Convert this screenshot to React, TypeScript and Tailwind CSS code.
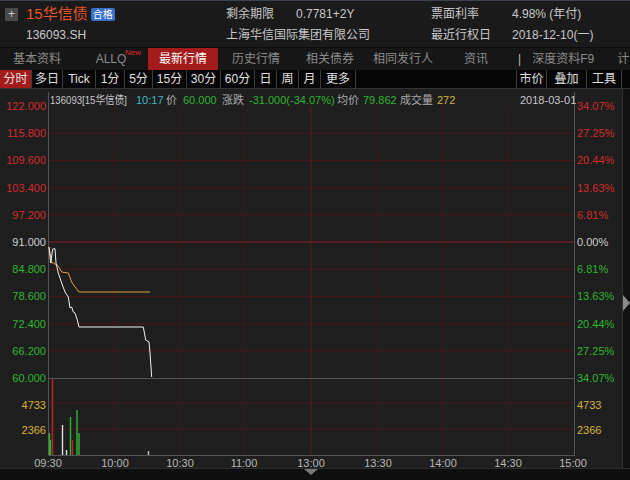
const FONT = { fontFamily: '"Liberation Sans", "Noto Sans CJK SC", sans-serif' };

const periods = ["分时", "多日", "Tick", "1分", "5分", "15分", "30分", "60分", "日", "周", "月", "更多"];
const periodW = [32, 31, 33, 29, 28, 34, 34, 34, 22, 22, 22, 35];

const tabs = [
  { label: "基本资料", w: 74 },
  { label: "ALLQ", w: 74, sup: true },
  { label: "最新行情", w: 70, active: true },
  { label: "历史行情", w: 76 },
  { label: "相关债券", w: 72 },
  { label: "相同发行人", w: 74 },
  { label: "资讯", w: 72 },
];

const priceRows = [
  { p: "122.000", r: "34.07%", c: "#d42a2a" },
  { p: "115.800", r: "27.25%", c: "#d42a2a" },
  { p: "109.600", r: "20.44%", c: "#d42a2a" },
  { p: "103.400", r: "13.63%", c: "#d42a2a" },
  { p: "97.200", r: "6.81%", c: "#d42a2a" },
  { p: "91.000", r: "0.00%", c: "#d0d0d0" },
  { p: "84.800", r: "6.81%", c: "#2fb52f" },
  { p: "78.600", r: "13.63%", c: "#2fb52f" },
  { p: "72.400", r: "20.44%", c: "#2fb52f" },
  { p: "66.200", r: "27.25%", c: "#2fb52f" },
  { p: "60.000", r: "34.07%", c: "#2fb52f" },
];

const times = [
  ["09:30", 48],
  ["10:00", 115],
  ["10:30", 180],
  ["11:00", 244],
  ["13:00", 311],
  ["13:30", 378],
  ["14:00", 443],
  ["14:30", 508],
  ["15:00", 573],
] as const;

const priceLine =
  "49,247 50.7,263 52.7,249 55,248.7 56,263 58.3,273 61.7,283 65,292 68.3,297 70,308 71.7,307 73.3,312 75,313 77.3,320 79,327 143.3,327 145.7,340 149,342 150,353 151.7,377";
const avgLine = "49,247 51.7,263 53.3,263 58.3,266 61.7,272 68.3,273 71.7,282 75,287 79,292 150,292";

const vols: [number, number, string][] = [
  [49.5, 433, "#2fb52f"],
  [50.5, 440, "#2fb52f"],
  [52.5, 379, "#c42020"],
  [62.5, 425, "#e0e0e0"],
  [66.5, 450, "#e0e0e0"],
  [70.5, 417, "#2fb52f"],
  [72.5, 440, "#c42020"],
  [77, 410, "#2fb52f"],
  [79, 433, "#2fb52f"],
  [148.5, 451, "#c0c0c0"],
];

function Chart() {
  const top = 106;
  const step = 27.2;
  return (
    <svg width={622} height={379} viewBox="0 89 622 379" style={FONT}>
      <rect x={0} y={89} width={622} height={379} fill="#1e1e1e" />
      {/* horizontal grid */}
      {priceRows.map((r, i) => {
        const y = top + i * step;
        if (i === 0 || i === 10) return null;
        return <line key={i} x1={48} x2={574} y1={y} y2={y} stroke={i === 5 ? "#8a1c1c" : "#4a1717"} strokeWidth={1} />;
      })}
      <line x1={48} x2={574} y1={429} y2={429} stroke="#4a1717" />
      <line x1={48} x2={574} y1={403} y2={403} stroke="#4a1717" />
      {/* vertical grid */}
      {times.slice(1, -1).map(([t, x]) => (
        <line key={t} x1={x} x2={x} y1={92} y2={455} stroke={x === 311 ? "#5e1a1a" : "#3e1616"} />
      ))}
      <line x1={48} x2={574} y1={378.5} y2={378.5} stroke="#555" />
      <line x1={48} x2={574} y1={455.5} y2={455.5} stroke="#555" />
      <line x1={48.5} x2={48.5} y1={92} y2={456} stroke="#555" />
      <line x1={574.5} x2={574.5} y1={92} y2={456} stroke="#555" />

      {/* axis labels */}
      {priceRows.map((r, i) => {
        const y = top + i * step + 4;
        return (
          <g key={i} fontSize={11}>
            <text x={46} y={y} textAnchor="end" fill={r.c}>{r.p}</text>
            <text x={577} y={y} fill={r.c}>{r.r}</text>
          </g>
        );
      })}
      <text x={46} y={409} textAnchor="end" fill="#d8b43a" fontSize={11}>4733</text>
      <text x={46} y={434} textAnchor="end" fill="#d8b43a" fontSize={11}>2366</text>
      <text x={577} y={409} fill="#d8b43a" fontSize={11}>4733</text>
      <text x={577} y={434} fill="#d8b43a" fontSize={11}>2366</text>
      {times.map(([t, x]) => (
        <text key={t} x={x} y={467} textAnchor="middle" fill="#b8b8b8" fontSize={11}>{t}</text>
      ))}

      {/* info line */}
      <g fontSize={11}>
        <rect x={49} y={91} width={470} height={15} fill="#1e1e1e" />
        <text x={50} y={104} fill="#c8c8c8" textLength={77} lengthAdjust="spacingAndGlyphs">136093[15华信债]</text>
        <text x={136} y={104} fill="#3fb8c8">10:17</text>
        <text x={166} y={104} fill="#aaa">价</text>
        <text x={183} y={104} fill="#2fb52f">60.000</text>
        <text x={222} y={104} fill="#aaa">涨跌</text>
        <text x={249} y={104} fill="#2fb52f">-31.000(-34.07%)</text>
        <text x={337} y={104} fill="#aaa">均价</text>
        <text x={363} y={104} fill="#2fb52f">79.862</text>
        <text x={400} y={104} fill="#aaa">成交量</text>
        <text x={437} y={104} fill="#d8b43a">272</text>
        <text x={520} y={104} fill="#c8c8c8">2018-03-01</text>
      </g>

      {/* volume bars */}
      {vols.map(([x, y, c], i) => (
        <line key={i} x1={x} x2={x} y1={y} y2={455} stroke={c} strokeWidth={1.4} />
      ))}

      {/* price lines */}
      <polyline points={avgLine} fill="none" stroke="#e0a040" strokeWidth={1} />
      <polyline points={priceLine} fill="none" stroke="#f0f0f0" strokeWidth={1} />
    </svg>
  );
}

export default function App() {
  return (
    <div className="w-[630px] h-[480px] bg-[#1e1e1e] flex flex-col overflow-hidden text-[12px]" style={FONT}>
      {/* header */}
      <div className="h-[48px] bg-[#1a1a1a] border-t border-[#3a4250] border-b border-b-[#0c0c0c] relative flex">
        <div className="w-[226px] flex flex-col pl-[5px]">
          <div className="h-[26px] flex items-center">
            <div className="w-[13px] h-[13px] bg-[#4a4a4a] text-[#ccc] text-[12px] leading-[13px] text-center">+</div>
            <span className="ml-[8px] text-[15px] text-[#e8562a]">15华信债</span>
            <span className="ml-[3px] px-[2px] h-[13px] leading-[13px] text-[10px] bg-[#3a6fc8] text-white rounded-[2px]">合格</span>
          </div>
          <div className="pl-[21px] text-[#c8c8c8] leading-[16px]">136093.SH</div>
        </div>
        <div className="w-[205px] flex flex-col text-[#c8c8c8]">
          <div className="h-[26px] flex items-center">
            <span className="w-[70px]">剩余期限</span>
            <span>0.7781+2Y</span>
          </div>
          <div className="leading-[16px]">上海华信国际集团有限公司</div>
        </div>
        <div className="flex flex-col text-[#c8c8c8]">
          <div className="h-[26px] flex items-center">
            <span className="w-[81px]">票面利率</span>
            <span>4.98% (年付)</span>
          </div>
          <div className="flex leading-[16px]">
            <span className="w-[81px]">最近行权日</span>
            <span>2018-12-10(一)</span>
          </div>
        </div>
      </div>

      {/* tabs */}
      <div className="h-[22px] bg-[#161616] flex items-stretch text-[#8c8c8c] whitespace-nowrap overflow-hidden">
        {tabs.map((t) => (
          <div
            key={t.label}
            className={`relative shrink-0 flex items-center justify-center ${t.active ? "bg-[#a31b1b] text-white" : ""}`}
            style={{ width: t.w }}
          >
            {t.label}
            {t.sup && <span className="absolute top-[-1px] right-[7px] text-[8px] text-[#e02828]">New</span>}
          </div>
        ))}
        <div className="shrink-0 flex items-center ml-[6px] text-[#bbb]">|</div>
        <div className="shrink-0 flex items-center ml-[11px]">深度资料F9</div>
        <div className="shrink-0 flex items-center ml-[23px]">计</div>
      </div>

      {/* periods */}
      <div className="h-[19px] bg-[#050505] flex items-stretch text-[#e0e0e0] text-[12px] border-b border-[#333]">
        <div className="flex">
          {periods.map((p, i) => (
            <div
              key={p}
              className={`shrink-0 flex items-center justify-center border-r border-[#3c3c3c] ${i === 0 ? "bg-[#a31b1b]" : ""}`}
              style={{ width: periodW[i] }}
            >
              {p}
            </div>
          ))}
        </div>
        <div className="flex ml-auto mr-[8px] border-l border-[#3c3c3c]">
          <div className="w-[30px] flex items-center justify-center border-r border-[#3c3c3c]">市价</div>
          <div className="w-[40px] flex items-center justify-center border-r border-[#3c3c3c]">叠加</div>
          <div className="w-[35px] flex items-center justify-center border-r border-[#3c3c3c]">工具</div>
        </div>
      </div>

      {/* chart */}
      <div className="flex h-[379px]">
        <Chart />
        <div className="w-[8px] bg-[#111] border-l border-[#333] flex flex-col justify-center pt-[206px] pb-[158px] items-end">
          <div className="w-0 h-0 border-t-[8px] border-b-[8px] border-l-[7px] border-t-transparent border-b-transparent border-l-[#8a8a8a]" />
        </div>
      </div>

      {/* bottom strip */}
      <div className="flex-1 bg-[#0f0f0f] border-t border-[#2c2c2c] flex">
        <div className="ml-[304px] w-0 h-0 border-l-[7px] border-r-[7px] border-t-[6px] border-l-transparent border-r-transparent border-t-[#777]" />
      </div>
    </div>
  );
}
